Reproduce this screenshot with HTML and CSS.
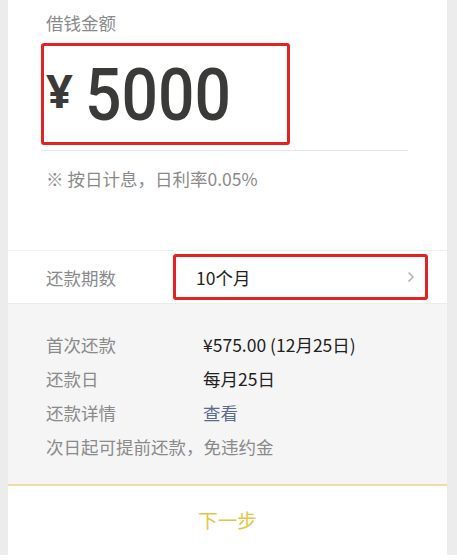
FILE: index.html
```html
<!DOCTYPE html>
<html lang="zh">
<head>
<meta charset="utf-8">
<link rel="stylesheet" href="styles.css">
</head>
<body>
<div class="frame">
  <div class="side side-left"></div>
  <main class="main">
    <section class="top">
      <div class="label">借钱金额</div>
      <div class="amount-line">
        <div class="amount-box">
          <span class="yen">¥</span><span class="num">5000</span>
        </div>
      </div>
      <div class="note">※ 按日计息，日利率0.05%</div>
    </section>
    <section class="term">
      <div class="term-label">还款期数</div>
      <div class="term-box">
        <span class="term-value">10个月</span>
        <svg class="chev" width="8" height="12" viewBox="0 0 8 12"><path d="M1.5 1.5 L6 6 L1.5 10.5" fill="none" stroke="#b4b4b4" stroke-width="1.6"/></svg>
      </div>
    </section>
    <section class="details">
      <div class="drow"><span class="dl">首次还款</span><span class="dv">¥575.00 (12月25日)</span></div>
      <div class="drow"><span class="dl">还款日</span><span class="dv">每月25日</span></div>
      <div class="drow"><span class="dl">还款详情</span><span class="dv link">查看</span></div>
      <div class="drow"><span class="dl">次日起可提前还款，免违约金</span></div>
    </section>
    <section class="next">下一步</section>
  </main>
  <div class="side side-right"></div>
</div>
</body>
</html>
```
FILE: styles.css
```css
html, body {
  margin: 0;
  padding: 0;
  background: #fff;
}
body {
  font-family: "Noto Sans CJK SC", "Noto Sans", sans-serif;
  width: 457px;
  height: 560px;
  overflow: hidden;
}
.frame {
  display: flex;
  height: 555px;
}
.side {
  background: #ececec;
}
.side-left { width: 8px; }
.side-right { width: 10px; }
.main {
  width: 439px;
  display: flex;
  flex-direction: column;
  background: #fff;
}
.top {
  height: 251px;
  box-sizing: border-box;
  padding: 10px 0 0 38px;
  border-bottom: 1px solid #efefef;
}
.label {
  font-size: 17.5px;
  line-height: 26px;
  color: #8a8a8a;
}
.amount-line {
  width: 367px;
  margin-left: -5px;
  margin-top: 7px;
  border-bottom: 1px solid #e6e6e6;
  padding-bottom: 5px;
}
.amount-box {
  width: 249px;
  height: 102px;
  box-sizing: border-box;
  border: 3px solid #e32222;
  border-radius: 3px;
  display: flex;
  align-items: flex-start;
  padding: 14px 0 0 2px;
}
.yen {
  font-family: "Noto Sans", sans-serif;
  font-weight: 700;
  font-size: 47px;
  line-height: 60px;
  color: #3a3a38;
  margin-right: 12px;
}
.num {
  display: inline-block;
  font-family: Roboto, "Noto Sans", sans-serif;
  font-weight: 500;
  font-size: 73px;
  line-height: 70px;
  color: #3a3a38;
  letter-spacing: 0;
  transform: scaleX(0.88);
  transform-origin: left center;
}
.note {
  margin-top: 15px;
  font-size: 17.5px;
  line-height: 26px;
  color: #8a8a8a;
}
.term {
  height: 52px;
  display: flex;
  align-items: center;
  padding-left: 38px;
  border-bottom: 1px solid #ececec;
}
.term-label {
  font-size: 17.5px;
  color: #8a8a8a;
  width: 127px;
}
.term-box {
  width: 255px;
  height: 46px;
  box-sizing: border-box;
  border: 3px solid #e32222;
  border-radius: 3px;
  display: flex;
  align-items: center;
  justify-content: space-between;
  padding: 0 10px 0 20px;
}
.term-value {
  font-size: 17.5px;
  color: #222;
}
.details {
  background: #f5f5f6;
  height: 182px;
  box-sizing: border-box;
  padding: 23px 0 0 38px;
  border-bottom: 2px solid #f0dfa4;
}
.drow {
  display: flex;
  height: 34px;
  align-items: center;
  font-size: 17.5px;
}
.dl {
  color: #8a8a8a;
  width: 157px;
  white-space: nowrap;
}
.dv {
  color: #222;
}
.link {
  color: #5b6b92;
}
.next {
  flex: 1;
  display: flex;
  align-items: center;
  justify-content: center;
  font-size: 19.5px;
  color: #e3c646;
  padding-bottom: 2px;
}
```
